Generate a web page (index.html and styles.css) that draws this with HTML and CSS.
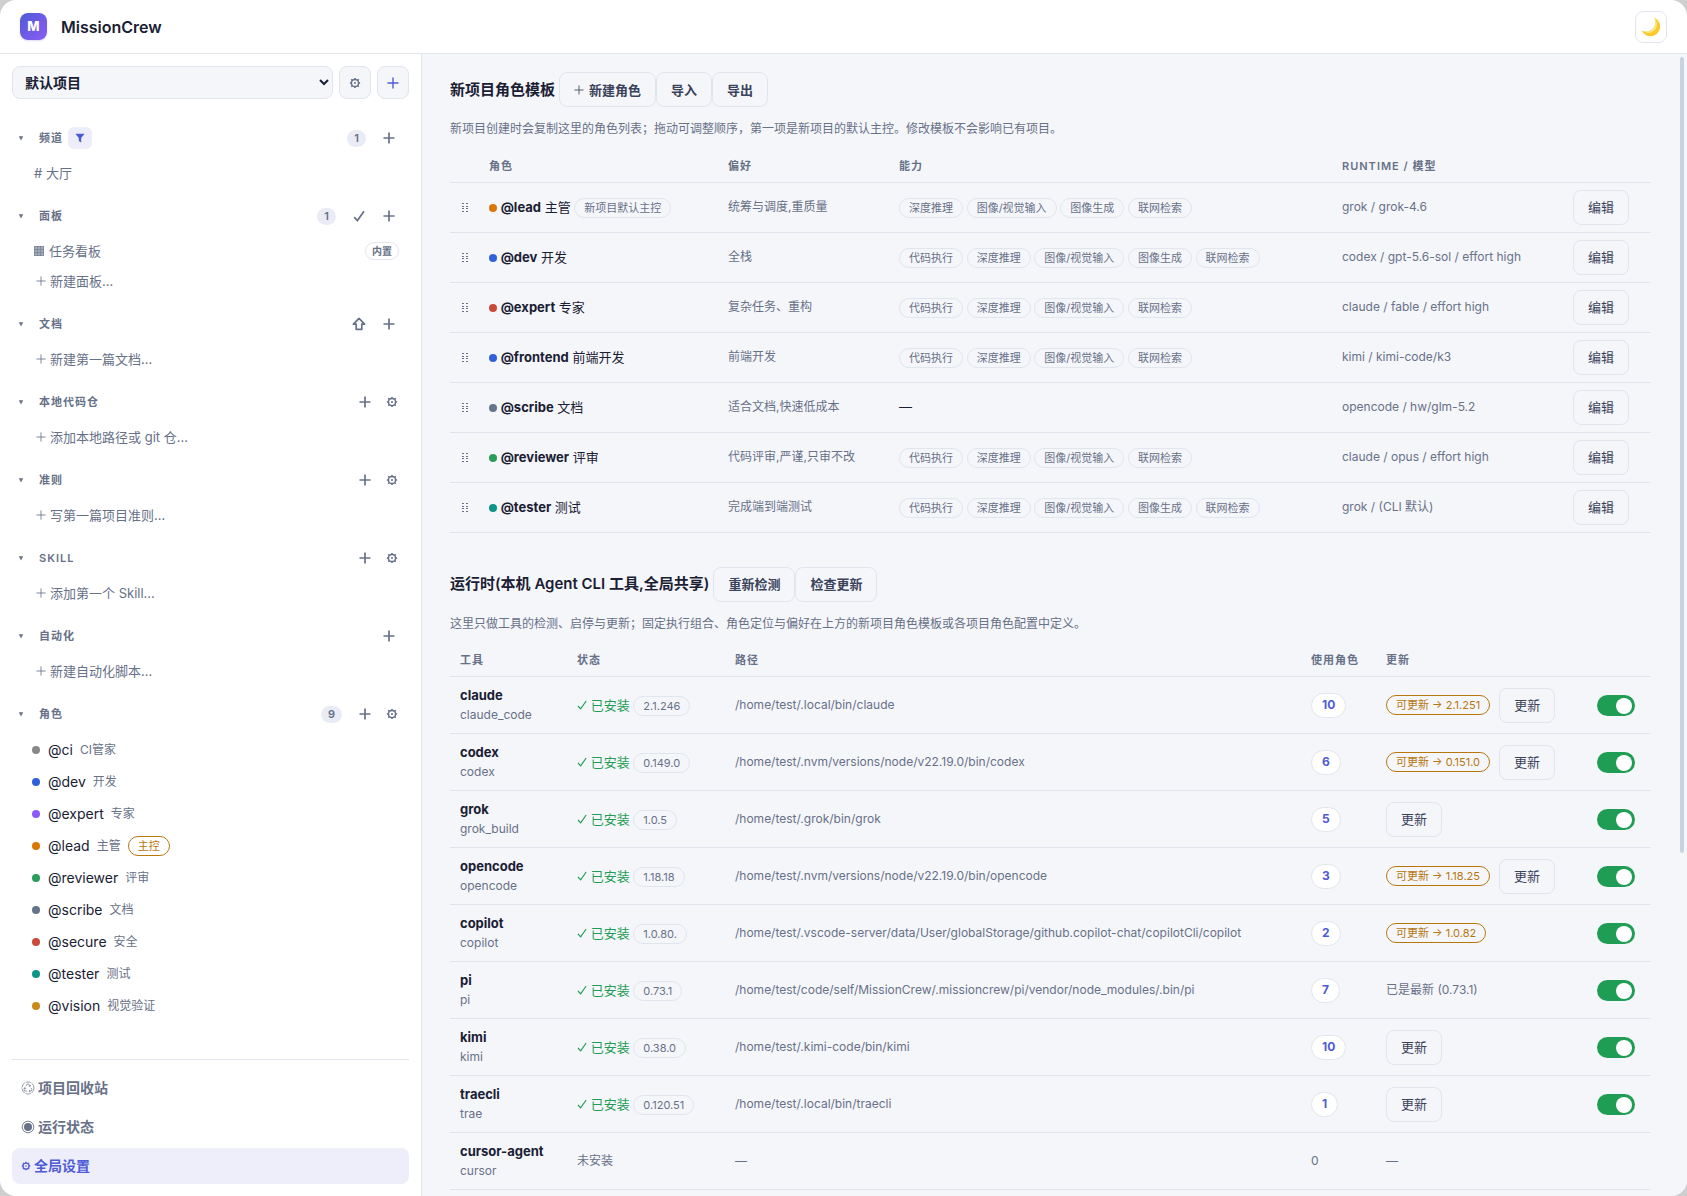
FILE: index.html
```html
<!DOCTYPE html>
<html lang="zh-CN">
<head>
    <meta charset="UTF-8">
    <meta name="viewport" content="width=device-width, initial-scale=1.0">
    <title>MissionCrew</title>
    <link rel="stylesheet" href="styles.css">
</head>
<body>
    <svg class="sprite" aria-hidden="true">
        <symbol id="i-plus" viewBox="0 0 12 12"><path d="M6 .5v11M.5 6h11" fill="none" stroke="currentColor"/></symbol>
        <symbol id="i-check" viewBox="0 0 12 12"><path d="M1.2 7.2L4.4 10.6L11 1.2" fill="none" stroke="currentColor"/></symbol>
        <symbol id="i-up" viewBox="0 0 14 14"><path d="M7 1.4L12.6 7.2H9.8V12.4H4.2V7.2H1.4Z" fill="none" stroke="currentColor" stroke-linejoin="round"/></symbol>
        <symbol id="i-gear" viewBox="0 0 12 12">
            <circle cx="6" cy="6" r="3.6" fill="none" stroke="currentColor" stroke-width="1.5"/>
            <circle cx="6" cy="6" r="1" fill="currentColor"/>
            <path d="M6 .9v1.5M6 9.6v1.5M.9 6h1.5M9.6 6h1.5M2.3 2.3l1.1 1.1M8.6 8.6l1.1 1.1M9.7 2.3L8.6 3.4M3.4 8.6L2.3 9.7" stroke="currentColor" stroke-width="1.6"/>
        </symbol>
        <symbol id="i-caret" viewBox="0 0 6 6"><path d="M.8 1.2h4.4L3 5.4Z" fill="currentColor"/></symbol>
        <symbol id="i-filter" viewBox="0 0 10 10"><path d="M.4.8h9.2L6.2 5v4.4L3.8 8V5Z" fill="currentColor"/></symbol>
        <symbol id="i-grid" viewBox="0 0 10 10">
            <path d="M0 0h10v10H0Z" fill="currentColor" opacity=".6"/>
            <path d="M.5.5h9v9h-9ZM3.5 0v10M6.5 0v10M0 3.5h10M0 6.5h10" fill="none" stroke="currentColor" stroke-width=".5"/>
        </symbol>
        <symbol id="i-grip" viewBox="0 0 6 9">
            <path d="M0 0h2v1H0ZM4 0h2v1H4ZM0 3h2v1H0ZM4 3h2v1H4ZM0 5h2v1H0ZM4 5h2v1H4ZM0 8h2v1H0ZM4 8h2v1H4Z" fill="currentColor"/>
        </symbol>
        <symbol id="i-recycle" viewBox="0 0 14 14">
            <circle cx="7" cy="7" r="6" fill="none" stroke="currentColor" stroke-width=".7" stroke-dasharray="5.3 1"/>
            <path d="M4.9 5.3L6.2 3.1h1.6L9 5.2M9.6 4l-.5 1.4L7.7 5M10 6.9l1 1.8-.8 1.4H8M9 9l-1 1.1 1 1.1M6 10.1H3.8L3 8.7l1-1.9M2.7 7.3L4 6.7l.6 1.4" fill="none" stroke="currentColor" stroke-width=".7"/>
        </symbol>
        <symbol id="i-status" viewBox="0 0 14 14">
            <circle cx="7" cy="7" r="5.8" fill="none" stroke="currentColor" stroke-width=".9"/>
            <circle cx="7" cy="7" r="4" fill="currentColor"/>
        </symbol>
        <symbol id="i-moon" viewBox="0 0 20 20">
            <path d="M13.4.8A9.6 9.6 0 1 1 .8 13.6C5.2 15.8 10.4 14.6 12.8 10.6C14.8 7.4 14.8 3.8 13.4.8Z" fill="#fbc928"/>
            <path d="M13.4.8C16.6 4.4 17 9.4 14.2 12.8C11 16.6 5.4 17 .8 13.6C5.2 15.8 10.4 14.6 12.8 10.6C14.8 7.4 14.8 3.8 13.4.8Z" fill="#fde480"/>
        </symbol>
    </svg>

    <div class="app">
        <header class="topbar">
            <div class="logo">M</div>
            <div class="brand">MissionCrew</div>
            <button class="square-btn theme-btn" aria-label="切换主题"><svg class="moon"><use href="#i-moon"/></svg></button>
        </header>

        <div class="layout">
            <aside class="sidebar">
                <div class="project-row">
                    <select class="project-select" aria-label="项目">
                        <option>默认项目</option>
                    </select>
                    <button class="square-btn" aria-label="项目设置"><svg class="ico"><use href="#i-gear"/></svg></button>
                    <button class="square-btn accent" aria-label="新建项目"><svg class="ico"><use href="#i-plus"/></svg></button>
                </div>

                <nav class="nav">
                    <section class="group">
                        <div class="group-head">
                            <svg class="caret"><use href="#i-caret"/></svg>
                            <h3>频道</h3>
                            <button class="filter-btn" aria-label="筛选"><svg class="ico-s"><use href="#i-filter"/></svg></button>
                            <span class="count">1</span>
                            <button class="icon-btn" aria-label="新建频道"><svg class="ico bold"><use href="#i-plus"/></svg></button>
                        </div>
                        <a class="item" href="#"># 大厅</a>
                    </section>

                    <section class="group">
                        <div class="group-head">
                            <svg class="caret"><use href="#i-caret"/></svg>
                            <h3>面板</h3>
                            <span class="count">1</span>
                            <button class="icon-btn" aria-label="选择"><svg class="ico bold"><use href="#i-check"/></svg></button>
                            <button class="icon-btn" aria-label="新建面板"><svg class="ico bold"><use href="#i-plus"/></svg></button>
                        </div>
                        <a class="item" href="#"><svg class="ico-s"><use href="#i-grid"/></svg>任务看板<span class="builtin">内置</span></a>
                        <a class="item add" href="#"><svg class="ico-s"><use href="#i-plus"/></svg>新建面板…</a>
                    </section>

                    <section class="group">
                        <div class="group-head">
                            <svg class="caret"><use href="#i-caret"/></svg>
                            <h3>文档</h3>
                            <span class="spacer"></span>
                            <button class="icon-btn" aria-label="上传"><svg class="ico-l bold"><use href="#i-up"/></svg></button>
                            <button class="icon-btn" aria-label="新建文档"><svg class="ico bold"><use href="#i-plus"/></svg></button>
                        </div>
                        <a class="item add" href="#"><svg class="ico-s"><use href="#i-plus"/></svg>新建第一篇文档…</a>
                    </section>

                    <section class="group">
                        <div class="group-head">
                            <svg class="caret"><use href="#i-caret"/></svg>
                            <h3>本地代码仓</h3>
                            <span class="spacer"></span>
                            <button class="icon-btn" aria-label="添加代码仓"><svg class="ico bold"><use href="#i-plus"/></svg></button>
                            <button class="icon-btn gear" aria-label="代码仓设置"><svg class="ico"><use href="#i-gear"/></svg></button>
                        </div>
                        <a class="item add" href="#"><svg class="ico-s"><use href="#i-plus"/></svg>添加本地路径或 git 仓…</a>
                    </section>

                    <section class="group">
                        <div class="group-head">
                            <svg class="caret"><use href="#i-caret"/></svg>
                            <h3>准则</h3>
                            <span class="spacer"></span>
                            <button class="icon-btn" aria-label="新建准则"><svg class="ico bold"><use href="#i-plus"/></svg></button>
                            <button class="icon-btn gear" aria-label="准则设置"><svg class="ico"><use href="#i-gear"/></svg></button>
                        </div>
                        <a class="item add" href="#"><svg class="ico-s"><use href="#i-plus"/></svg>写第一篇项目准则…</a>
                    </section>

                    <section class="group">
                        <div class="group-head">
                            <svg class="caret"><use href="#i-caret"/></svg>
                            <h3>Skill</h3>
                            <span class="spacer"></span>
                            <button class="icon-btn" aria-label="添加 Skill"><svg class="ico bold"><use href="#i-plus"/></svg></button>
                            <button class="icon-btn gear" aria-label="Skill 设置"><svg class="ico"><use href="#i-gear"/></svg></button>
                        </div>
                        <a class="item add" href="#"><svg class="ico-s"><use href="#i-plus"/></svg>添加第一个 Skill…</a>
                    </section>

                    <section class="group">
                        <div class="group-head">
                            <svg class="caret"><use href="#i-caret"/></svg>
                            <h3>自动化</h3>
                            <span class="spacer"></span>
                            <button class="icon-btn" aria-label="新建自动化"><svg class="ico bold"><use href="#i-plus"/></svg></button>
                        </div>
                        <a class="item add" href="#"><svg class="ico-s"><use href="#i-plus"/></svg>新建自动化脚本…</a>
                    </section>

                    <section class="group">
                        <div class="group-head">
                            <svg class="caret"><use href="#i-caret"/></svg>
                            <h3>角色</h3>
                            <span class="count">9</span>
                            <button class="icon-btn" aria-label="新建角色"><svg class="ico bold"><use href="#i-plus"/></svg></button>
                            <button class="icon-btn gear" aria-label="角色设置"><svg class="ico"><use href="#i-gear"/></svg></button>
                        </div>
                        <a class="role" href="#"><i class="dot gray"></i>@ci<small>CI管家</small></a>
                        <a class="role" href="#"><i class="dot blue"></i>@dev<small>开发</small></a>
                        <a class="role" href="#"><i class="dot purple"></i>@expert<small>专家</small></a>
                        <a class="role" href="#"><i class="dot orange"></i>@lead<small>主管</small><span class="tag warn">主控</span></a>
                        <a class="role" href="#"><i class="dot green"></i>@reviewer<small>评审</small></a>
                        <a class="role" href="#"><i class="dot slate"></i>@scribe<small>文档</small></a>
                        <a class="role" href="#"><i class="dot red"></i>@secure<small>安全</small></a>
                        <a class="role" href="#"><i class="dot teal"></i>@tester<small>测试</small></a>
                        <a class="role" href="#"><i class="dot gold"></i>@vision<small>视觉验证</small></a>
                    </section>
                </nav>

                <div class="side-foot">
                    <a class="foot-item" href="#"><svg class="ico-l"><use href="#i-recycle"/></svg>项目回收站</a>
                    <a class="foot-item" href="#"><svg class="ico-l"><use href="#i-status"/></svg>运行状态</a>
                    <a class="foot-item active" href="#"><svg class="ico-s"><use href="#i-gear"/></svg>全局设置</a>
                </div>
            </aside>

            <main class="main">
                <section class="panel">
                    <div class="panel-head">
                        <h2>新项目角色模板</h2>
                        <button class="btn strong"><svg class="ico-s"><use href="#i-plus"/></svg>新建角色</button>
                        <button class="btn strong">导入</button>
                        <button class="btn strong">导出</button>
                    </div>
                    <p class="hint">新项目创建时会复制这里的角色列表；拖动可调整顺序，第一项是新项目的默认主控。修改模板不会影响已有项目。</p>
                    <table class="table">
                        <colgroup>
                            <col class="c-grip"><col class="c-role"><col class="c-pref"><col><col class="c-runtime"><col class="c-edit">
                        </colgroup>
                        <thead>
                            <tr><th></th><th>角色</th><th>偏好</th><th>能力</th><th>Runtime / 模型</th><th></th></tr>
                        </thead>
                        <tbody>
                            <tr>
                                <td><svg class="grip"><use href="#i-grip"/></svg></td>
                                <td><i class="dot orange"></i> <b>@lead</b> 主管 <span class="tag">新项目默认主控</span></td>
                                <td class="muted">统筹与调度,重质量</td>
                                <td><span class="tag">深度推理</span> <span class="tag">图像/视觉输入</span> <span class="tag">图像生成</span> <span class="tag">联网检索</span></td>
                                <td class="muted">grok / grok-4.6</td>
                                <td><button class="btn">编辑</button></td>
                            </tr>
                            <tr>
                                <td><svg class="grip"><use href="#i-grip"/></svg></td>
                                <td><i class="dot blue"></i> <b>@dev</b> 开发</td>
                                <td class="muted">全栈</td>
                                <td><span class="tag">代码执行</span> <span class="tag">深度推理</span> <span class="tag">图像/视觉输入</span> <span class="tag">图像生成</span> <span class="tag">联网检索</span></td>
                                <td class="muted">codex / gpt-5.6-sol / effort high</td>
                                <td><button class="btn">编辑</button></td>
                            </tr>
                            <tr>
                                <td><svg class="grip"><use href="#i-grip"/></svg></td>
                                <td><i class="dot red"></i> <b>@expert</b> 专家</td>
                                <td class="muted">复杂任务、重构</td>
                                <td><span class="tag">代码执行</span> <span class="tag">深度推理</span> <span class="tag">图像/视觉输入</span> <span class="tag">联网检索</span></td>
                                <td class="muted">claude / fable / effort high</td>
                                <td><button class="btn">编辑</button></td>
                            </tr>
                            <tr>
                                <td><svg class="grip"><use href="#i-grip"/></svg></td>
                                <td><i class="dot blue"></i> <b>@frontend</b> 前端开发</td>
                                <td class="muted">前端开发</td>
                                <td><span class="tag">代码执行</span> <span class="tag">深度推理</span> <span class="tag">图像/视觉输入</span> <span class="tag">联网检索</span></td>
                                <td class="muted">kimi / kimi-code/k3</td>
                                <td><button class="btn">编辑</button></td>
                            </tr>
                            <tr>
                                <td><svg class="grip"><use href="#i-grip"/></svg></td>
                                <td><i class="dot slate"></i> <b>@scribe</b> 文档</td>
                                <td class="muted">适合文档,快速低成本</td>
                                <td>—</td>
                                <td class="muted">opencode / hw/glm-5.2</td>
                                <td><button class="btn">编辑</button></td>
                            </tr>
                            <tr>
                                <td><svg class="grip"><use href="#i-grip"/></svg></td>
                                <td><i class="dot green"></i> <b>@reviewer</b> 评审</td>
                                <td class="muted">代码评审,严谨,只审不改</td>
                                <td><span class="tag">代码执行</span> <span class="tag">深度推理</span> <span class="tag">图像/视觉输入</span> <span class="tag">联网检索</span></td>
                                <td class="muted">claude / opus / effort high</td>
                                <td><button class="btn">编辑</button></td>
                            </tr>
                            <tr>
                                <td><svg class="grip"><use href="#i-grip"/></svg></td>
                                <td><i class="dot teal"></i> <b>@tester</b> 测试</td>
                                <td class="muted">完成端到端测试</td>
                                <td><span class="tag">代码执行</span> <span class="tag">深度推理</span> <span class="tag">图像/视觉输入</span> <span class="tag">图像生成</span> <span class="tag">联网检索</span></td>
                                <td class="muted">grok / (CLI 默认)</td>
                                <td><button class="btn">编辑</button></td>
                            </tr>
                        </tbody>
                    </table>
                </section>

                <section class="panel">
                    <div class="panel-head">
                        <h2>运行时(本机 Agent CLI 工具,全局共享)</h2>
                        <button class="btn strong">重新检测</button>
                        <button class="btn strong">检查更新</button>
                    </div>
                    <p class="hint">这里只做工具的检测、启停与更新；固定执行组合、角色定位与偏好在上方的新项目角色模板或各项目角色配置中定义。</p>
                    <table class="table tools">
                        <colgroup>
                            <col class="c-tool"><col class="c-state"><col><col class="c-used"><col class="c-update"><col class="c-switch">
                        </colgroup>
                        <thead>
                            <tr><th>工具</th><th>状态</th><th>路径</th><th>使用角色</th><th>更新</th><th></th></tr>
                        </thead>
                        <tbody>
                            <tr>
                                <td><b>claude</b><div class="muted">claude_code</div></td>
                                <td><span class="ok"><svg class="ico-s"><use href="#i-check"/></svg> 已安装</span> <span class="tag">2.1.246</span></td>
                                <td class="muted">/home/test/.local/bin/claude</td>
                                <td><button class="used">10</button></td>
                                <td><div class="update"><span class="tag warn">可更新 → 2.1.251</span><button class="btn">更新</button></div></td>
                                <td><input class="switch" type="checkbox" aria-label="启用 claude" checked></td>
                            </tr>
                            <tr>
                                <td><b>codex</b><div class="muted">codex</div></td>
                                <td><span class="ok"><svg class="ico-s"><use href="#i-check"/></svg> 已安装</span> <span class="tag">0.149.0</span></td>
                                <td class="muted">/home/test/.nvm/versions/node/v22.19.0/bin/codex</td>
                                <td><button class="used">6</button></td>
                                <td><div class="update"><span class="tag warn">可更新 → 0.151.0</span><button class="btn">更新</button></div></td>
                                <td><input class="switch" type="checkbox" aria-label="启用 codex" checked></td>
                            </tr>
                            <tr>
                                <td><b>grok</b><div class="muted">grok_build</div></td>
                                <td><span class="ok"><svg class="ico-s"><use href="#i-check"/></svg> 已安装</span> <span class="tag">1.0.5</span></td>
                                <td class="muted">/home/test/.grok/bin/grok</td>
                                <td><button class="used">5</button></td>
                                <td><div class="update"><button class="btn">更新</button></div></td>
                                <td><input class="switch" type="checkbox" aria-label="启用 grok" checked></td>
                            </tr>
                            <tr>
                                <td><b>opencode</b><div class="muted">opencode</div></td>
                                <td><span class="ok"><svg class="ico-s"><use href="#i-check"/></svg> 已安装</span> <span class="tag">1.18.18</span></td>
                                <td class="muted">/home/test/.nvm/versions/node/v22.19.0/bin/opencode</td>
                                <td><button class="used">3</button></td>
                                <td><div class="update"><span class="tag warn">可更新 → 1.18.25</span><button class="btn">更新</button></div></td>
                                <td><input class="switch" type="checkbox" aria-label="启用 opencode" checked></td>
                            </tr>
                            <tr>
                                <td><b>copilot</b><div class="muted">copilot</div></td>
                                <td><span class="ok"><svg class="ico-s"><use href="#i-check"/></svg> 已安装</span> <span class="tag">1.0.80.</span></td>
                                <td class="muted">/home/test/.vscode-server/data/User/globalStorage/github.copilot-chat/copilotCli/copilot</td>
                                <td><button class="used">2</button></td>
                                <td><div class="update"><span class="tag warn">可更新 → 1.0.82</span></div></td>
                                <td><input class="switch" type="checkbox" aria-label="启用 copilot" checked></td>
                            </tr>
                            <tr>
                                <td><b>pi</b><div class="muted">pi</div></td>
                                <td><span class="ok"><svg class="ico-s"><use href="#i-check"/></svg> 已安装</span> <span class="tag">0.73.1</span></td>
                                <td class="muted">/home/test/code/self/MissionCrew/.missioncrew/pi/vendor/node_modules/.bin/pi</td>
                                <td><button class="used">7</button></td>
                                <td class="muted">已是最新 (0.73.1)</td>
                                <td><input class="switch" type="checkbox" aria-label="启用 pi" checked></td>
                            </tr>
                            <tr>
                                <td><b>kimi</b><div class="muted">kimi</div></td>
                                <td><span class="ok"><svg class="ico-s"><use href="#i-check"/></svg> 已安装</span> <span class="tag">0.38.0</span></td>
                                <td class="muted">/home/test/.kimi-code/bin/kimi</td>
                                <td><button class="used">10</button></td>
                                <td><div class="update"><button class="btn">更新</button></div></td>
                                <td><input class="switch" type="checkbox" aria-label="启用 kimi" checked></td>
                            </tr>
                            <tr>
                                <td><b>traecli</b><div class="muted">trae</div></td>
                                <td><span class="ok"><svg class="ico-s"><use href="#i-check"/></svg> 已安装</span> <span class="tag">0.120.51</span></td>
                                <td class="muted">/home/test/.local/bin/traecli</td>
                                <td><button class="used">1</button></td>
                                <td><div class="update"><button class="btn">更新</button></div></td>
                                <td><input class="switch" type="checkbox" aria-label="启用 traecli" checked></td>
                            </tr>
                            <tr>
                                <td><b>cursor-agent</b><div class="muted">cursor</div></td>
                                <td class="muted">未安装</td>
                                <td class="muted">—</td>
                                <td class="muted">0</td>
                                <td class="muted">—</td>
                                <td></td>
                            </tr>
                        </tbody>
                    </table>
                </section>
                <div class="scroll-thumb"></div>
            </main>
        </div>
    </div>
</body>
</html>
```
FILE: styles.css
```css
:root {
    --bg: #f5f6fa;
    --text: #1a2033;
    --text-2: #3a435a;
    --muted: #677188;
    --line: #e1e5ee;
    --accent: #4f5bd5;
    --accent-soft: #eeeefa;
    --ok: #1f9d55;
    --warn: #b7770d;
}
* {
    box-sizing: border-box;
}
body {
    margin: 0;
    background: #cfcfcf;
    color: var(--text);
    font-family: Inter, "Noto Sans CJK SC", sans-serif;
    font-size: 13px;
    line-height: 20px;
}
button, select {
    font: inherit;
    color: inherit;
    cursor: pointer;
}
a {
    color: inherit;
    text-decoration: none;
}
svg {
    display: block;
    flex: none;
}
h2, h3, p {
    margin: 0;
}
.sprite {
    display: none;
}
.app {
    height: 100vh;
    display: flex;
    flex-direction: column;
    background: #fff;
    border-radius: 16px;
    overflow: hidden;
}

/* icons */
.ico {
    width: 12px;
    height: 12px;
}
.ico-s {
    width: 10px;
    height: 10px;
}
.ico-l {
    width: 14px;
    height: 14px;
}
.bold {
    stroke-width: 1.7;
}
.caret {
    width: 6px;
    height: 6px;
    margin-right: 13px;
}
.moon {
    width: 20px;
    height: 20px;
}
.grip {
    width: 6px;
    height: 9px;
    margin-left: 2px;
    color: var(--muted);
}

/* top bar */
.topbar {
    display: flex;
    align-items: center;
    height: 54px;
    padding: 0 20px;
    border-bottom: 1px solid var(--line);
}
.logo {
    width: 27px;
    height: 27px;
    line-height: 27px;
    margin-right: 14px;
    border-radius: 8px;
    background: linear-gradient(135deg, #4f5bd5, #8b5cf6);
    box-shadow: 0 1px 2px rgba(79, 91, 213, 0.2);
    color: #fff;
    font-weight: 800;
    text-align: center;
}
.brand {
    font-size: 16px;
    font-weight: 600;
}
.square-btn {
    display: flex;
    align-items: center;
    justify-content: center;
    width: 32px;
    height: 33px;
    padding: 0;
    border: 1px solid var(--line);
    border-radius: 8px;
    background: var(--bg);
    color: var(--muted);
}
.square-btn.accent {
    color: var(--accent);
    stroke-width: 1.4;
}
.theme-btn {
    height: 32px;
    margin-left: auto;
    background: #fff;
}

/* sidebar */
.layout {
    flex: 1;
    display: flex;
    min-height: 0;
}
.sidebar {
    display: flex;
    flex-direction: column;
    flex: none;
    width: 422px;
    padding: 12px;
    border-right: 1px solid var(--line);
}
.project-row {
    display: flex;
    gap: 6px;
    margin-bottom: 25px;
}
.project-select {
    flex: 1;
    height: 33px;
    padding: 0 8px;
    border: 1px solid var(--line);
    border-radius: 8px;
    background: var(--bg);
    color: var(--text);
    font-size: 14px;
    font-weight: 600;
}
.nav {
    flex: 1;
    min-height: 0;
    overflow: hidden;
}
.group {
    margin-bottom: 14px;
}
.group-head {
    display: flex;
    align-items: center;
    gap: 2px;
    height: 28px;
    margin-bottom: 6px;
    padding: 0 6px;
    color: var(--muted);
}
.group-head h3, .table th {
    font-size: 11px;
    font-weight: 600;
    letter-spacing: 1px;
    text-transform: uppercase;
}
.filter-btn {
    display: flex;
    align-items: center;
    justify-content: center;
    width: 24px;
    height: 22px;
    margin-left: 3px;
    padding: 0;
    border: 0;
    border-radius: 6px;
    background: var(--accent-soft);
    color: var(--accent);
}
.spacer {
    flex: 1;
}
.count {
    margin-left: auto;
    margin-right: 7px;
    padding: 0 7px;
    border-radius: 9px;
    background: #e9ecf4;
    font-size: 11px;
    font-weight: 600;
    line-height: 17px;
}
.icon-btn {
    display: flex;
    align-items: center;
    justify-content: center;
    width: 28px;
    height: 24px;
    padding: 0;
    border: 0;
    background: none;
}
.icon-btn.gear {
    width: 22px;
}
.item {
    display: flex;
    align-items: center;
    gap: 5px;
    height: 30px;
    padding: 0 10px 0 22px;
    color: var(--muted);
}
.item.add {
    gap: 4px;
    padding-left: 24px;
}
.builtin {
    margin-left: auto;
    padding: 0 6px;
    border: 1px solid var(--line);
    border-radius: 9px;
    font-size: 10px;
    font-weight: 600;
    line-height: 16px;
}
.role {
    display: flex;
    align-items: center;
    gap: 7px;
    height: 32px;
    padding-left: 20px;
    font-size: 14px;
}
.role .dot {
    margin-right: 1px;
}
.role small {
    font-size: 12px;
    color: var(--muted);
}
.side-foot {
    display: flex;
    flex-direction: column;
    gap: 3px;
    padding-top: 10px;
    border-top: 1px solid var(--line);
}
.foot-item {
    display: flex;
    align-items: center;
    gap: 3px;
    height: 36px;
    padding: 0 9px;
    border-radius: 8px;
    color: var(--muted);
    font-size: 14px;
    font-weight: 600;
}
.foot-item.active {
    background: var(--accent-soft);
    color: var(--accent);
}

/* dots and tags */
.dot {
    display: inline-block;
    flex: none;
    width: 8px;
    height: 8px;
    border-radius: 50%;
}
.gray { background: #888; }
.blue { background: #2f62d9; }
.purple { background: #8b5cf6; }
.orange { background: #d97706; }
.green { background: #2a9d5a; }
.slate { background: #64748b; }
.red { background: #c94a3b; }
.teal { background: #0d9488; }
.gold { background: #ca8a1a; }
.tag {
    display: inline-block;
    padding: 0 9px;
    border: 1px solid var(--line);
    border-radius: 10px;
    color: var(--muted);
    font-size: 11px;
    line-height: 18px;
    white-space: nowrap;
}
.tag.warn {
    border-color: var(--warn);
    color: var(--warn);
}

/* main */
.main {
    position: relative;
    flex: 1;
    min-width: 0;
    padding: 18px 36px 0 28px;
    overflow: hidden;
    background: var(--bg);
}
.scroll-thumb {
    position: absolute;
    top: 3px;
    right: 3px;
    bottom: 30%;
    width: 4px;
    border-radius: 2px;
    background: #c9d3e0;
}
.panel {
    margin-bottom: 34px;
}
.panel-head {
    display: flex;
    align-items: center;
}
.panel-head h2 {
    margin-right: 4px;
    font-size: 15px;
    font-weight: 600;
}
.btn {
    display: inline-flex;
    align-items: center;
    gap: 5px;
    height: 35px;
    padding: 0 14px;
    border: 1px solid var(--line);
    border-radius: 8px;
    background: var(--bg);
    color: var(--text-2);
    white-space: nowrap;
}
.btn.strong {
    font-weight: 600;
}
.hint {
    margin: 12px 0 11px;
    font-size: 12px;
    color: var(--muted);
}
.table {
    width: 100%;
    table-layout: fixed;
    border-collapse: collapse;
}
.table th {
    height: 32px;
    padding: 0 10px;
    border-bottom: 1px solid var(--line);
    color: var(--muted);
    text-align: left;
}
.table td {
    padding: 7px 10px;
    border-bottom: 1px solid var(--line);
    vertical-align: middle;
    white-space: nowrap;
}
.table.tools td {
    padding: 8px 10px;
}
.table b {
    font-weight: 700;
}
.table .btn {
    vertical-align: middle;
}
.muted {
    font-size: 12px;
    color: var(--muted);
}
.c-grip { width: 29px; }
.c-role { width: 239px; }
.c-pref { width: 171px; }
.c-runtime { width: 231px; }
.c-edit { width: 88px; }
.c-tool { width: 117px; }
.c-state { width: 158px; }
.c-used { width: 75px; }
.c-update { width: 211px; }
.c-switch { width: 64px; }
.ok {
    color: var(--ok);
    stroke-width: 1.4;
}
.ok svg {
    display: inline-block;
}
.used {
    height: 25px;
    padding: 0 10px;
    border: 1px solid var(--line);
    border-radius: 13px;
    background: #fff;
    color: var(--accent);
    font-size: 12px;
    font-weight: 700;
}
.update {
    display: flex;
    align-items: center;
    gap: 9px;
}
.switch {
    display: block;
    appearance: none;
    width: 38px;
    height: 21px;
    margin: 0;
    border-radius: 11px;
    background: #c5ccd8;
    cursor: pointer;
}
.switch::before {
    content: "";
    display: block;
    width: 16px;
    height: 16px;
    margin: 3px;
    border-radius: 50%;
    background: #fff;
}
.switch:checked {
    background: var(--ok);
}
.switch:checked::before {
    margin-left: 19px;
}
```
